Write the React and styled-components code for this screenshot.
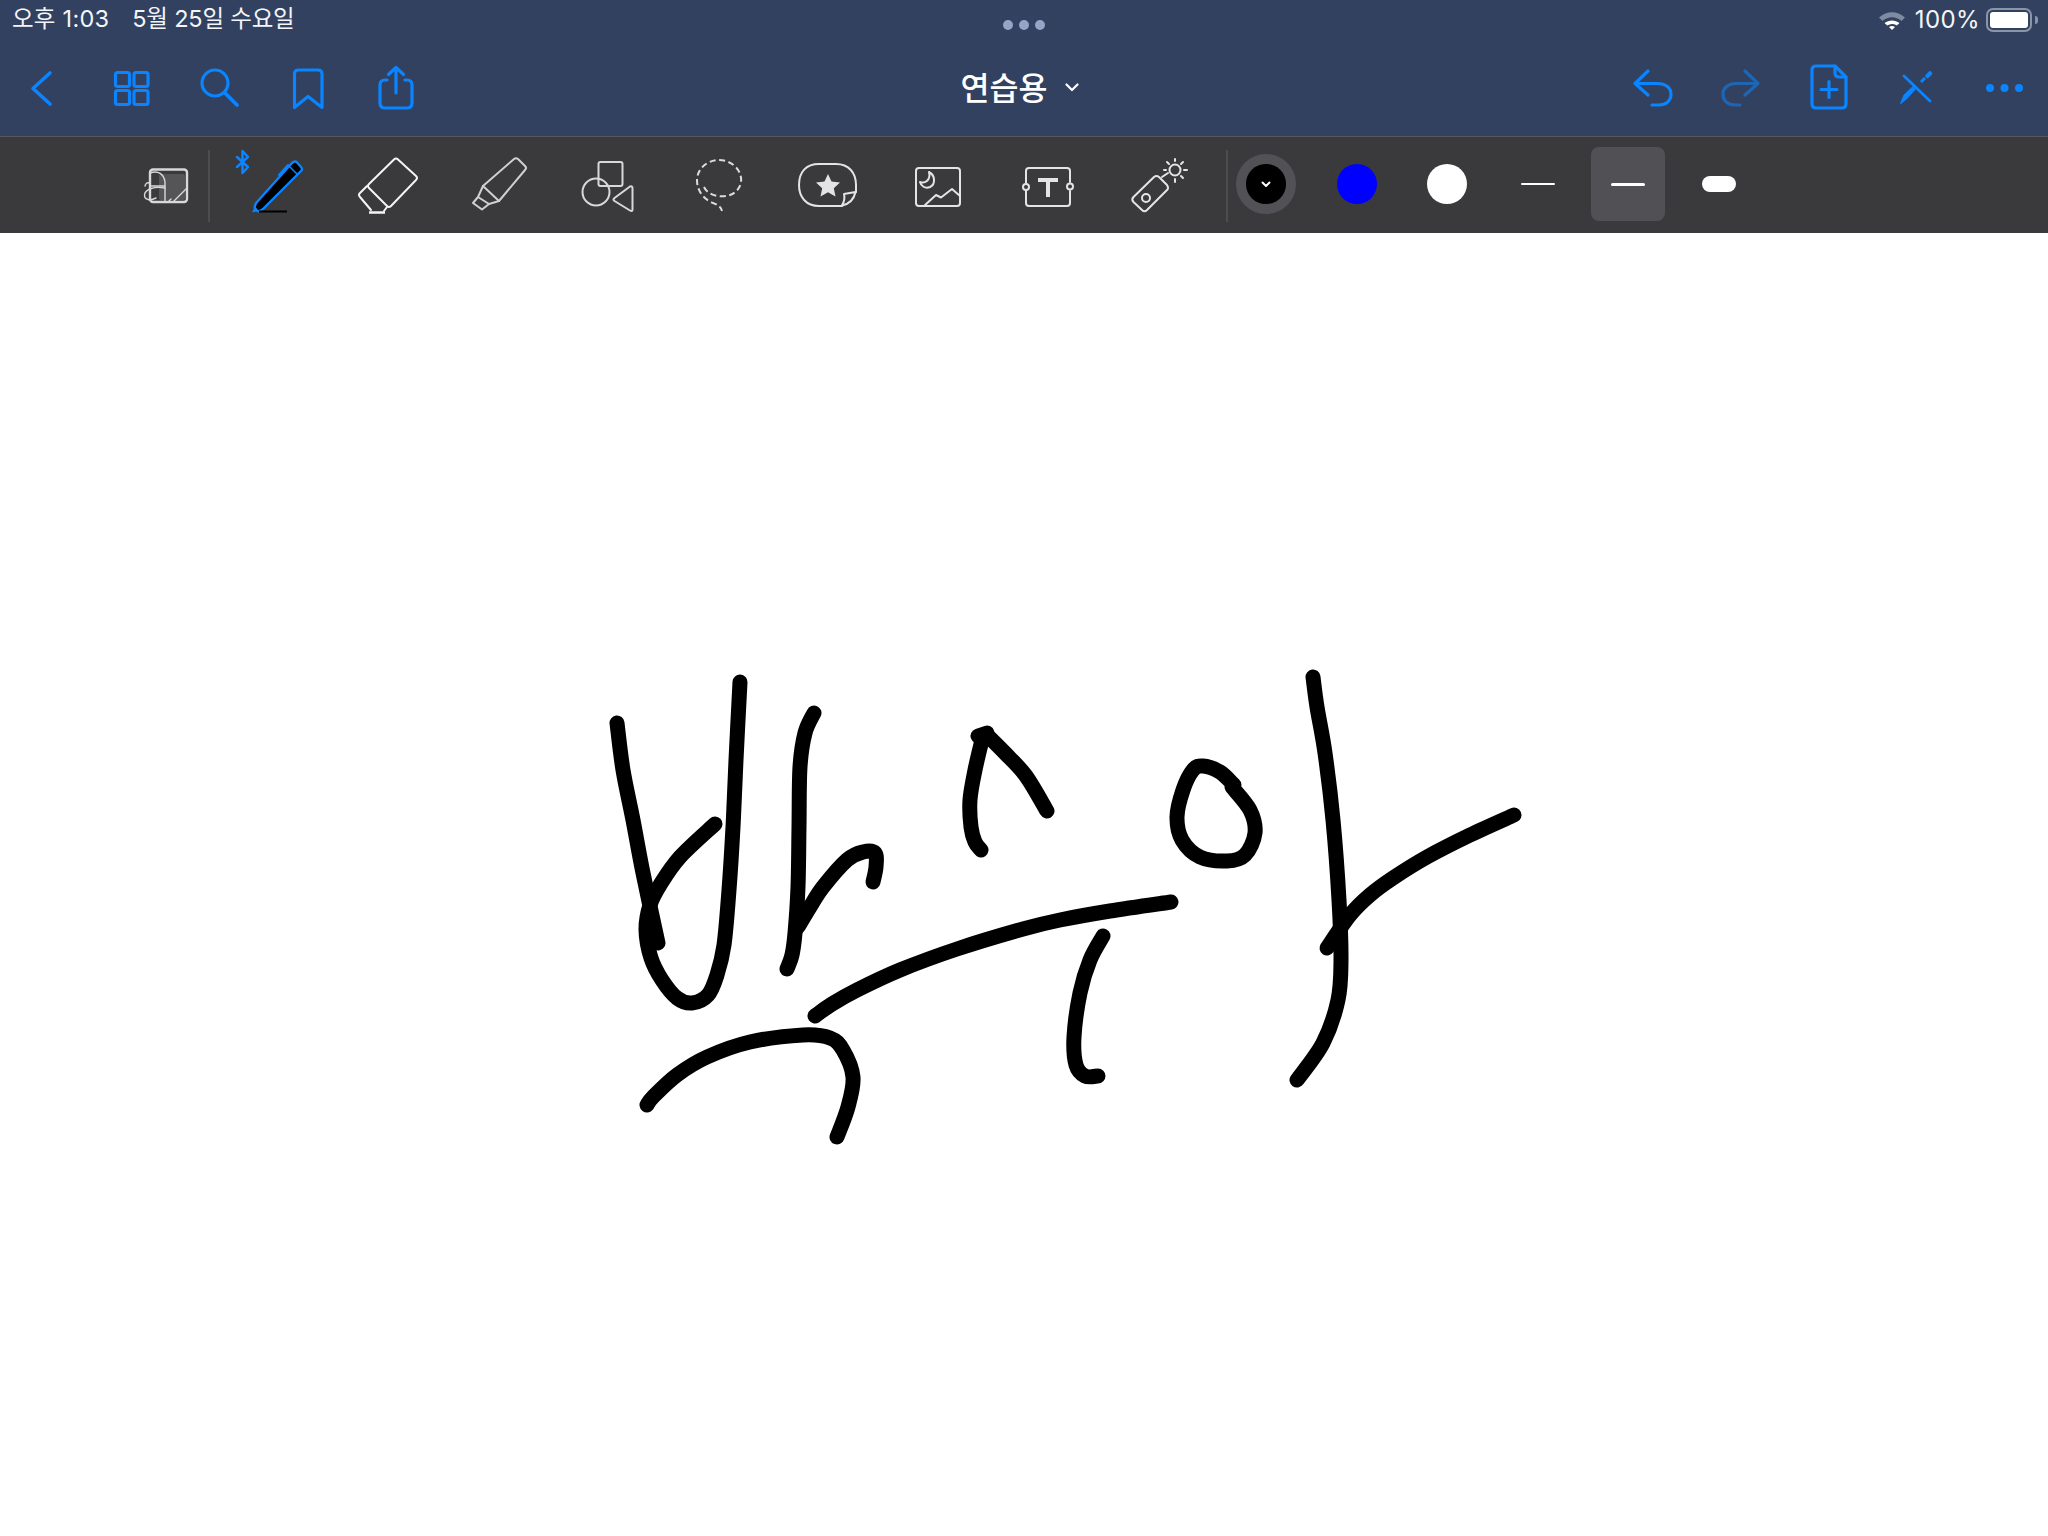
import React from "react";
import styled, { createGlobalStyle } from "styled-components";

const BLUE = "#0a84ff";
const LINE = "#e4e4e4";

const GlobalStyle = createGlobalStyle`
  html, body {
    margin: 0;
    padding: 0;
    background: #fff;
  }
  body {
    font-family: Inter, "Noto Sans CJK KR", "Noto Sans", sans-serif;
  }
`;

// ink strokes, in page pixels
const STROKES = [
  [[617, 723], [623, 770], [633, 820], [643, 873], [658, 943]],
  [[740, 682], [736, 760], [733, 827], [729, 890], [724, 945], [717, 975], [708, 995], [692, 1003], [677, 998], [662, 980], [651, 958], [646, 930], [650, 905], [660, 885], [680, 857], [715, 824]],
  [[814, 713], [805, 733], [800, 767], [799, 827], [798, 887], [795, 933], [792, 955], [787, 969]],
  [[798, 927], [810, 907], [823, 887], [847, 860], [863, 852], [875, 853], [876, 867], [873, 882]],
  [[978, 736], [987, 733]],
  [[987, 735], [1005, 753], [1026, 776], [1047, 811]],
  [[982, 740], [975, 770], [970, 800], [971, 827], [975, 842], [981, 850]],
  [[815, 1016], [832, 1004], [857, 990], [900, 970], [957, 949], [1023, 929], [1060, 920], [1110, 911], [1171, 902]],
  [[647, 1105], [653, 1097], [677, 1075], [707, 1057], [750, 1042], [803, 1035], [830, 1038], [843, 1050], [853, 1077], [848, 1107], [837, 1137]],
  [[1103, 936], [1090, 960], [1080, 993], [1074, 1037], [1076, 1065], [1085, 1076], [1098, 1076]],
  [[1234, 785], [1220, 772], [1203, 766], [1193, 770], [1183, 790], [1177, 817], [1182, 840], [1200, 857], [1227, 861], [1245, 855], [1255, 833], [1250, 810], [1232, 787]],
  [[1313, 677], [1317, 707], [1325, 753], [1333, 820], [1339, 900], [1341, 960], [1338, 1000], [1323, 1043], [1297, 1080]],
  [[1514, 815], [1470, 835], [1427, 857], [1393, 878], [1370, 895], [1350, 915], [1327, 948]],
];

const smoothPath = (pts) => {
  let d = `M${pts[0][0]} ${pts[0][1]}`;
  for (let i = 0; i < pts.length - 1; i++) {
    const p0 = pts[i - 1] || pts[i];
    const p1 = pts[i];
    const p2 = pts[i + 1];
    const p3 = pts[i + 2] || p2;
    const c1x = p1[0] + (p2[0] - p0[0]) / 6;
    const c1y = p1[1] + (p2[1] - p0[1]) / 6;
    const c2x = p2[0] - (p3[0] - p1[0]) / 6;
    const c2y = p2[1] - (p3[1] - p1[1]) / 6;
    d += ` C${c1x} ${c1y} ${c2x} ${c2y} ${p2[0]} ${p2[1]}`;
  }
  return d;
};

const Page = styled.div`
  width: 2048px;
  height: 1536px;
  display: flex;
  flex-direction: column;
  overflow: hidden;
`;

const Header = styled.header`
  background: #31415f;
  color: #f4f5f8;
`;

const StatusBar = styled.div`
  height: 40px;
  display: grid;
  grid-template-columns: 1fr auto 1fr;
  align-items: start;
  font-size: 23.5px;
  letter-spacing: 0.25px;
  line-height: 38px;
`;

const StatusLeft = styled.div`
  display: flex;
  gap: 23px;
  padding-left: 12px;
`;

const DateText = styled.span`
  letter-spacing: -0.2px;
`;

const StatusRight = styled.div`
  display: flex;
  justify-content: flex-end;
  align-items: center;
  height: 40px;
  padding-right: 10px;
`;

const Dots = styled.div`
  display: flex;
  gap: 6px;
  padding-top: 20px;
`;

const Dot = styled.span`
  width: 10px;
  height: 10px;
  border-radius: 50%;
  background: #94a5c8;
`;

const Percent = styled.span`
  margin: 0 6px 0 9px;
  line-height: 40px;
  font-size: 24px;
  letter-spacing: 0.4px;
`;

const Battery = styled.div`
  position: relative;
  width: 46px;
  height: 24px;
  box-sizing: border-box;
  border: 2px solid #8b95a8;
  border-radius: 7px;
  padding: 2px;
  margin-right: 6px;

  &::after {
    content: "";
    position: absolute;
    right: -8px;
    top: 6px;
    width: 3px;
    height: 8px;
    border-radius: 0 3px 3px 0;
    background: #8b95a8;
  }
`;

const BatteryFill = styled.div`
  height: 100%;
  border-radius: 3px;
  background: #fff;
`;

const NavBar = styled.nav`
  height: 96px;
  display: flex;
  justify-content: space-between;
  align-items: center;
`;

const NavGroup = styled.div`
  display: flex;
`;

const NavSvg = styled.svg`
  display: block;
  width: 88px;
  height: 96px;
  fill: none;
  stroke: ${(p) => p.$color || BLUE};
  stroke-width: 3.2;
  stroke-linecap: round;
  stroke-linejoin: round;
`;

const NavIcon = ({ x, color, children }) => (
  <NavSvg viewBox={`${x} 40 88 96`} $color={color}>
    {children}
  </NavSvg>
);

const Title = styled.div`
  display: flex;
  align-items: center;
  gap: 18px;
  margin: 0 8px 4px 0;
  font-size: 31.5px;
  font-weight: 500;
  font-family: "Noto Sans CJK KR", sans-serif;
  color: #fff;
`;

const TitleChevron = styled.svg`
  margin-top: 3px;
  fill: none;
  stroke: #fff;
  stroke-width: 2.2;
  stroke-linecap: round;
  stroke-linejoin: round;
`;

const Toolbar = styled.div`
  height: 96px;
  box-sizing: content-box;
  display: flex;
  align-items: center;
  padding-left: 140px;
  border-top: 1px solid #57585c;
  background: #3a3a3c;
`;

const ToolSvg = styled.svg`
  display: block;
  flex: none;
  width: ${(p) => p.$w}px;
  height: 96px;
  fill: none;
  stroke: ${(p) => p.$color || LINE};
  stroke-width: 2;
  stroke-linecap: round;
  stroke-linejoin: round;
`;

const Tool = ({ x, w = 110, color, children }) => (
  <ToolSvg viewBox={`${x} 137 ${w} 96`} $w={w} $color={color}>
    {children}
  </ToolSvg>
);

const Divider = styled.div`
  flex: none;
  width: 2px;
  height: 72px;
  margin: 2px ${(p) => p.$right}px 0 ${(p) => p.$left}px;
  background: #4d4d50;
`;

const Options = styled.div`
  display: flex;
  gap: 16.5px;
  margin: 0 0 2px 1px;
`;

const Slot = styled.div`
  width: 74px;
  height: 74px;
  display: flex;
  align-items: center;
  justify-content: center;
  border-radius: 8px;
  background: ${(p) => (p.$selected ? "#515155" : "transparent")};
`;

const Ring = styled.div`
  width: 60px;
  height: 60px;
  box-sizing: border-box;
  display: flex;
  align-items: center;
  justify-content: center;
  border-radius: 50%;
  border: 10px solid #515156;
`;

const Swatch = styled.div`
  width: 40px;
  height: 40px;
  display: flex;
  align-items: center;
  justify-content: center;
  border-radius: 50%;
  background: ${(p) => p.$color};
`;

const Thickness = styled.div`
  width: 34px;
  height: ${(p) => p.$size}px;
  border-radius: ${(p) => p.$size / 2}px;
  background: #fff;
`;

const Canvas = styled.main`
  flex: 1;
  background: #fff;
`;

const Ink = styled.svg`
  display: block;
  width: 2048px;
  height: 1303px;
  fill: none;
  stroke: #000;
  stroke-width: 15;
  stroke-linecap: round;
  stroke-linejoin: round;
`;

export default function App() {
  return (
    <Page>
      <GlobalStyle />
      <Header>
        <StatusBar>
          <StatusLeft>
            <span>오후 1:03</span>
            <DateText>5월 25일 수요일</DateText>
          </StatusLeft>
          <Dots>
            <Dot />
            <Dot />
            <Dot />
          </Dots>
          <StatusRight>
            <svg width="28" height="20" viewBox="0 0 28 20">
              <path d="M1 7.500C9 0.500 19 0.500 27 7.500L23.500 11C17.500 6 10.500 6 4.500 11Z" fill="#7f8ba3" />
              <path d="M6.500 13C11 9.500 17 9.500 21.500 13L18.800 15.500C15.800 13.500 12.200 13.500 9.200 15.500Z" fill="#fff" />
              <path d="M11 17C13 15.700 15 15.700 17 17L14 20Z" fill="#fff" />
            </svg>
            <Percent>100%</Percent>
            <Battery>
              <BatteryFill />
            </Battery>
          </StatusRight>
        </StatusBar>
        <NavBar>
          <NavGroup>
            <NavIcon x={0}>
              <path d="M50 73L33 88.500L50 104" strokeWidth="3.6" />
            </NavIcon>
            <NavIcon x={88}>
              <rect x="115.500" y="72.500" width="14" height="14" rx="2" />
              <rect x="134" y="72.500" width="14" height="14" rx="2" />
              <rect x="115.500" y="90.500" width="14" height="14" rx="2" />
              <rect x="134" y="90.500" width="14" height="14" rx="2" />
            </NavIcon>
            <NavIcon x={176}>
              <circle cx="215" cy="83" r="13" />
              <path d="M225 93L237 105" strokeWidth="3.8" />
            </NavIcon>
            <NavIcon x={264}>
              <path d="M294.500 107.500V74Q294.500 70 298.500 70H318Q322 70 322 74V107.500L308 96.500Z" />
            </NavIcon>
            <NavIcon x={352}>
              <path d="M387 80H385Q380 80 380 85V103Q380 108 385 108H407Q412 108 412 103V85Q412 80 407 80H405" />
              <path d="M396 93V67.500M388.500 74.500L396 67.500L403.500 74.500" />
            </NavIcon>
          </NavGroup>
          <Title>
            연습용
            <TitleChevron width="14" height="9" viewBox="0 0 14 9">
              <path d="M1.500 1.500L7 7L12.500 1.500" />
            </TitleChevron>
          </Title>
          <NavGroup>
            <NavIcon x={1608}>
              <path d="M1648 71L1635 83.500L1648 95M1635 83.500H1657C1666 83.500 1671 88 1671 94C1671 101 1666 105 1659 105H1652" />
            </NavIcon>
            <NavIcon x={1696} color="#1e66b4">
              <path d="M1745 71L1758 83.500L1745 95M1758 83.500H1736C1728 83.500 1723 88 1723 94C1723 101 1728 105 1735 105H1740" />
            </NavIcon>
            <NavIcon x={1784}>
              <path d="M1835 66H1816Q1812 66 1812 70V104Q1812 108 1816 108H1842Q1846 108 1846 104V77Z" />
              <path d="M1835 66V73Q1835 77 1839 77H1846" />
              <path d="M1829 81.500V97.500M1821 89.500H1837" />
            </NavIcon>
            <NavIcon x={1872}>
              <path d="M1904 76L1930 101" strokeWidth="2.800" />
              <path d="M1900.500 103.500L1904 95L1913 86.500L1915.500 89L1907 98.500Z" fill={BLUE} stroke={BLUE} strokeWidth="1" />
              <path d="M1921 82L1925 78" strokeWidth="3" strokeLinecap="butt" />
              <path d="M1927.500 76L1930 73.500" strokeWidth="4.500" />
            </NavIcon>
            <NavIcon x={1960}>
              <circle cx="1990" cy="88" r="4" fill={BLUE} stroke="none" />
              <circle cx="2004.500" cy="88" r="4" fill={BLUE} stroke="none" />
              <circle cx="2019" cy="88" r="4" fill={BLUE} stroke="none" />
            </NavIcon>
          </NavGroup>
        </NavBar>
      </Header>

      <Toolbar>
        <Tool x={140} w={68} color="#d8d8d8">
          <rect x="159" y="174" width="26" height="26" rx="2" fill="#555558" stroke="none" />
          <rect x="150" y="169.500" width="37" height="32.500" rx="3" strokeWidth="2.400" />
          <path d="M150 173C158 170 164 174 165 182V202M151 186H165" strokeWidth="1.400" />
          <path d="M165 188C155 186 145 189 144.500 195C144.500 200 150 201 156 198M145 186Q146 182 149 183" strokeWidth="1.400" />
          <path d="M174 201L186 189M169 201L171 199" strokeWidth="1.400" />
        </Tool>
        <Divider $left={0} $right={15} />

        <Tool x={225}>
          <path d="M237 157L248 167L242.500 173V151L248 157L237 167" stroke={BLUE} strokeWidth="2.500" />
          <path d="M279 175L288 165" stroke={BLUE} strokeWidth="2" />
          <path d="M292 163L257 202Q253 207 256 210Q259 213 264 208L301 171Q303 169 301 167L297 162.500Q295 160.500 292 163Z" fill="#000" stroke={BLUE} strokeWidth="2.400" />
          <path d="M290 167L297 174" stroke={BLUE} strokeWidth="1.500" />
          <path d="M252 212.500L255 206L258.500 211Z" fill={BLUE} stroke="none" />
          <path d="M259 211.500H287" stroke="#000" strokeWidth="2" strokeLinecap="butt" />
        </Tool>
        <Tool x={335} color="#f4f4f4">
          <path d="M394 159.500Q396 157.500 398 159.500L416 176Q418 178 416 180L391 206Q389 208 387 206L369 188Q367 186 369 184Z" />
          <path d="M367 186L360 193Q358 195 360 197L371 210M387 207L384 211" />
          <path d="M369 212.500H385" strokeWidth="2.500" strokeLinecap="butt" />
        </Tool>
        <Tool x={445} color="#d0d0d0">
          <path d="M514 159Q516 157.500 518 159L525 166Q527 168 525 170L499 201L483 186Z" />
          <path d="M483 186L478 197L489 204L499 201M478 197L473 203L482 209.500L489 204" />
        </Tool>
        <Tool x={555} color="#d8d8d8">
          <rect x="598.500" y="162" width="24" height="24" rx="2" />
          <circle cx="596" cy="192" r="13.500" />
          <path d="M632.500 188.500V209.500Q632.500 212 630 210.500L614.500 201Q612.500 199.500 614.500 198L630 186.500Q632.500 185.500 632.500 188.500Z" />
        </Tool>
        <Tool x={665} color="#dcdcdc">
          <path
            d="M704 187C708 196 722 198 730 195C738 192 742 185 741 178C740 168 730 160 719 160C706 160 697 170 697 180C697 192 705 200 713 203C718 205 721 207 722 211"
            strokeDasharray="6 3.500"
            strokeLinecap="butt"
          />
        </Tool>
        <Tool x={775}>
          <path d="M842 206H819C806 206 799 197 799 185C799 172 806 164 819 164H836C849 164 856 173 856 185V192Z" />
          <path d="M855.500 192L844 194C845 198 844 202 842 205.500C849 204 854 199 855.500 192Z" fill="#3a3a3c" />
          <path d="M828 174L831.500 181.500L840 182.500L833.800 188.300L835.500 196.500L828 192.300L820.500 196.500L822.200 188.300L816 182.500L824.500 181.500Z" fill={LINE} stroke="none" />
        </Tool>
        <Tool x={885}>
          <rect x="916" y="168" width="44" height="38" rx="3" />
          <path d="M929 172C935 175 936 184 930 187C925 189 921 186 920 182C925 184 931 180 929 172Z" />
          <path d="M924 206L936 195L941 197.500L952 189L960 196" />
        </Tool>
        <Tool x={995}>
          <path d="M1026 183V171Q1026 168 1029 168H1067Q1070 168 1070 171V182M1070 191V203Q1070 206 1067 206H1029Q1026 206 1026 203V191" />
          <circle cx="1026" cy="187" r="3" />
          <circle cx="1070" cy="186.500" r="3" />
          <path d="M1038 178H1058V182H1050V197H1046V182H1038Z" fill={LINE} stroke="none" />
        </Tool>
        <Tool x={1105}>
          <path d="M1133.500 197L1154 177Q1156.500 175 1159 177L1167 185Q1169 188 1167 190L1147 210Q1144.500 212.500 1142 210L1133.500 202Q1131 199.500 1133.500 197Z" />
          <circle cx="1146" cy="198" r="4" />
          <path d="M1162 177L1168 173" />
          <circle cx="1175" cy="170" r="5.500" />
          <path d="M1175 159V161M1175 179V182M1164 170H1166M1184 170H1187M1167 162L1169 164M1181 176L1183 178M1183 162L1181 164" />
        </Tool>

        <Divider $left={11} $right={0} />
        <Options>
          <Slot>
            <Ring>
              <Swatch $color="#000">
                <svg width="10" height="7" viewBox="0 0 10 7" fill="none" stroke="#fff" strokeWidth="2" strokeLinecap="round" strokeLinejoin="round">
                  <path d="M1.500 1.500L5 5L8.500 1.500" />
                </svg>
              </Swatch>
            </Ring>
          </Slot>
          <Slot>
            <Swatch $color="#0000ff" />
          </Slot>
          <Slot>
            <Swatch $color="#fff" />
          </Slot>
          <Slot>
            <Thickness $size={2} />
          </Slot>
          <Slot $selected>
            <Thickness $size={3} />
          </Slot>
          <Slot>
            <Thickness $size={16} />
          </Slot>
        </Options>
      </Toolbar>

      <Canvas>
        <Ink viewBox="0 233 2048 1303">
          {STROKES.map((pts, i) => (
            <path key={i} d={smoothPath(pts)} />
          ))}
        </Ink>
      </Canvas>
    </Page>
  );
}
